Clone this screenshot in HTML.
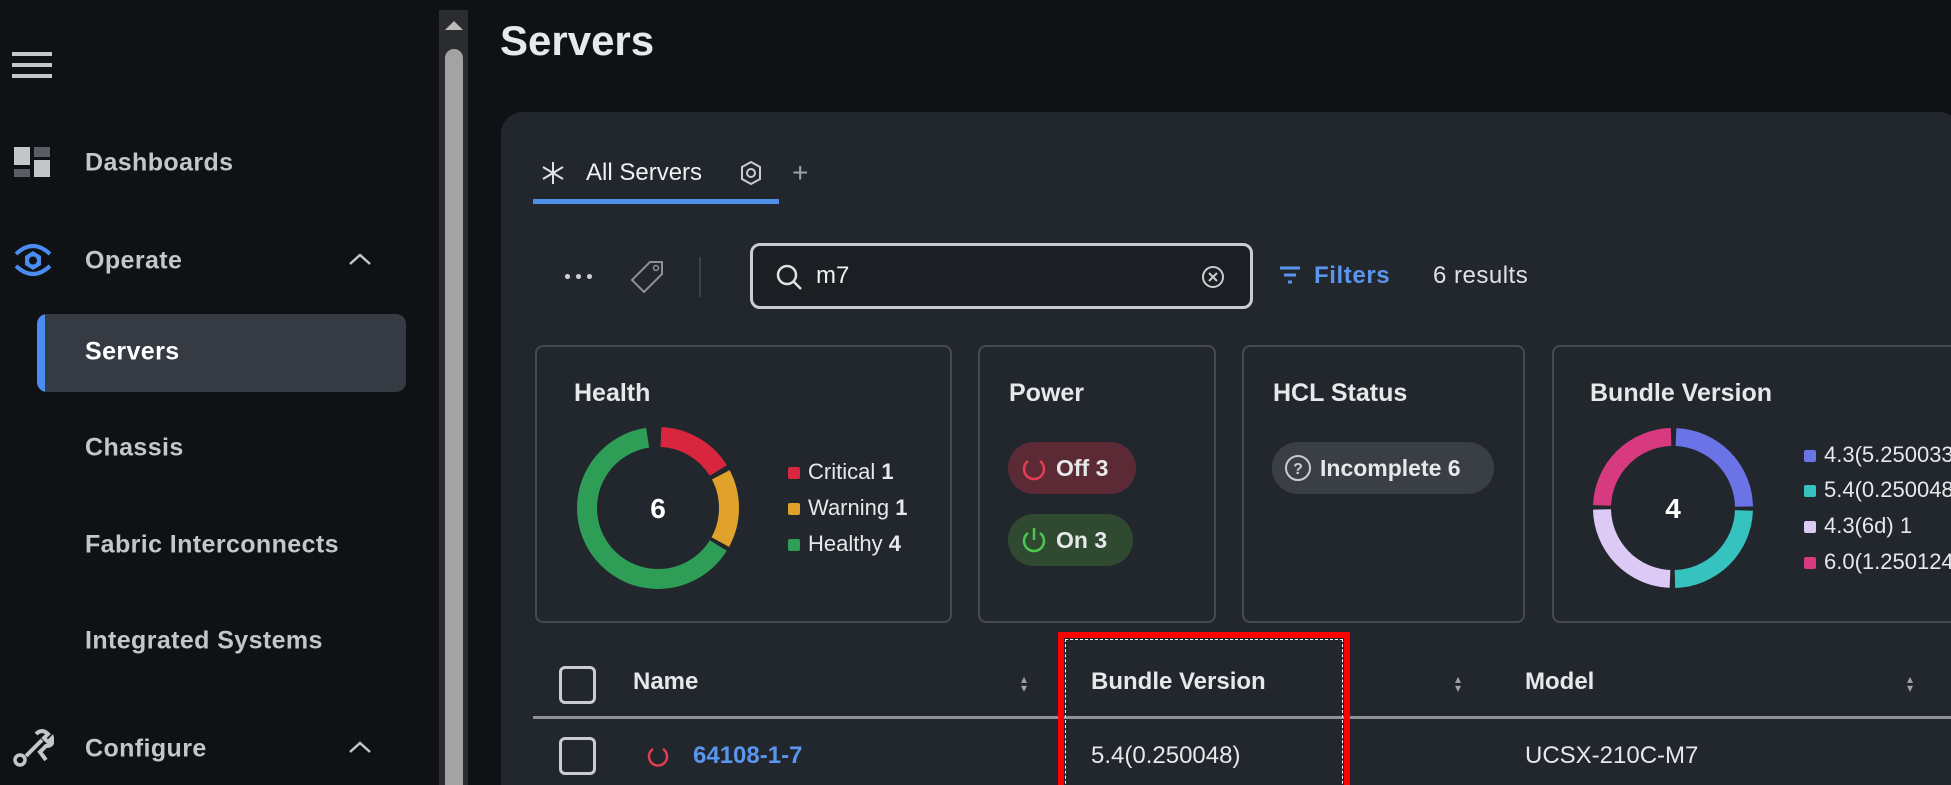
<!DOCTYPE html>
<html><head><meta charset="utf-8"><style>
*{margin:0;padding:0;box-sizing:border-box}
html,body{width:1951px;height:785px;overflow:hidden}
body{background:#0f1115;font-family:"Liberation Sans",sans-serif;color:#e6e8ea;position:relative}
#w{position:absolute;left:0;top:0;width:1951px;height:785px;overflow:hidden}
.a{position:absolute;white-space:nowrap}
.nav{font-size:25px;font-weight:bold;color:#c3c6ca;letter-spacing:.4px;transform:translateY(-50%)}
.t{font-size:24px;transform:translateY(-50%)}
.b{font-weight:bold}
.card{position:absolute;top:345px;height:278px;border:2px solid #454a52;border-radius:8px;background:#22262d}
.ct{font-size:25px;font-weight:bold;color:#e6e8ea}
.sq{display:inline-block;width:12px;height:12px;border-radius:2px;margin-right:8px}
.pill{position:absolute;height:52px;border-radius:26px;font-size:23px;font-weight:bold;display:flex;align-items:center;padding-left:10px}
.cb{position:absolute;width:37px;height:38px;border:3px solid #c9ccd0;border-radius:6px}
.sort{position:absolute;color:#9ea3a9;font-size:12px;line-height:9px;transform:translateY(-50%)}
</style></head><body><div id="w">
<div class="a" style="left:12px;top:52px;width:40px;height:4px;background:#c3c6ca"></div>
<div class="a" style="left:12px;top:63px;width:40px;height:4px;background:#c3c6ca"></div>
<div class="a" style="left:12px;top:74px;width:40px;height:4px;background:#c3c6ca"></div>
<svg class="a" style="left:12px;top:147px" width="40" height="32"><rect x="2" y="0" width="16" height="18" fill="#c3c6ca"/><rect x="2" y="22" width="16" height="8" fill="#5a5e64"/><rect x="22" y="0" width="16" height="10" fill="#5a5e64"/><rect x="22" y="13" width="16" height="17" fill="#c3c6ca"/></svg>
<div class="a nav" style="left:85px;top:163px">Dashboards</div>
<svg class="a" style="left:10px;top:240px" width="46" height="40" viewBox="0 0 46 40"><path d="M6 14 Q23 -2 40 14" stroke="#4a8cf0" stroke-width="4" fill="none"/><path d="M6 26 Q23 42 40 26" stroke="#4a8cf0" stroke-width="4" fill="none"/><polygon points="23,11 31,16 31,25 23,30 15,25 15,16" fill="#4a8cf0"/><circle cx="23" cy="20.5" r="4" fill="#0f1115"/></svg>
<div class="a nav" style="left:85px;top:261px">Operate</div>
<svg class="a" style="left:348px;top:252px" width="24" height="14"><path d="M2 12 L12 3 L22 12" stroke="#c3c6ca" stroke-width="2.5" fill="none"/></svg>
<div class="a" style="left:37px;top:314px;width:369px;height:78px;background:#363a42;border-radius:10px;overflow:hidden"><div style="width:8px;height:100%;background:#4a8cf0"></div></div>
<div class="a nav" style="left:85px;top:352px;color:#fff">Servers</div>
<div class="a nav" style="left:85px;top:448px">Chassis</div>
<div class="a nav" style="left:85px;top:545px">Fabric Interconnects</div>
<div class="a nav" style="left:85px;top:641px">Integrated Systems</div>
<svg class="a" style="left:12px;top:728px" width="42" height="40"><path d="M14 28 L30 12 M24 6 Q30 0 36 6 L32 10 L36 14 L40 10 Q42 18 34 18 L28 24 L34 32" stroke="#c3c6ca" stroke-width="4" fill="none"/><circle cx="8" cy="32" r="5" stroke="#c3c6ca" stroke-width="3.5" fill="none"/></svg>
<div class="a nav" style="left:85px;top:749px">Configure</div>
<svg class="a" style="left:348px;top:740px" width="24" height="14"><path d="M2 12 L12 3 L22 12" stroke="#c3c6ca" stroke-width="2.5" fill="none"/></svg>
<div class="a" style="left:439px;top:10px;width:29px;height:775px;background:#2a2c30"></div>
<svg class="a" style="left:442px;top:18px" width="24" height="14"><polygon points="3,12 12,3 21,12" fill="#bbb"/></svg>
<div class="a" style="left:445px;top:49px;width:18px;height:760px;background:#a3a3a3;border-radius:9px"></div>
<div class="a b" style="left:500px;top:41px;font-size:42px;transform:translateY(-50%);color:#e6e8ea">Servers</div>
<div class="a" style="left:501px;top:112px;width:1460px;height:700px;background:#22262d;border-radius:22px"></div>
<svg class="a" style="left:540px;top:160px" width="26" height="26"><path d="M13 2 V24 M3 7 L23 19 M3 19 L23 7" stroke="#dfe1e4" stroke-width="2"/></svg>
<div class="a t" style="left:586px;top:173px;color:#eef0f2">All Servers</div>
<svg class="a" style="left:738px;top:160px" width="26" height="26"><polygon points="13,2 22,7 22,19 13,24 4,19 4,7" stroke="#c9ccd0" stroke-width="2" fill="none"/><circle cx="13" cy="13" r="4" stroke="#c9ccd0" stroke-width="2" fill="none"/></svg>
<div class="a t" style="left:792px;top:173px;color:#9ea3a9;font-size:28px">+</div>
<div class="a" style="left:533px;top:199px;width:246px;height:5px;background:#4f8fe8"></div>
<div class="a" style="left:562px;top:274px;width:34px;height:5px;background:radial-gradient(circle,#c9ccd0 2.3px,transparent 2.8px) 0 0/11px 5px repeat-x"></div>
<svg class="a" style="left:628px;top:258px" width="38" height="38"><path d="M22 4 L34 4 L34 16 L16 34 L4 22 Z" stroke="#8d9197" stroke-width="2" fill="none"/><circle cx="28" cy="10" r="2.5" stroke="#8d9197" stroke-width="1.5" fill="none"/></svg>
<div class="a" style="left:699px;top:257px;width:2px;height:40px;background:#3c4047"></div>
<div class="a" style="left:750px;top:243px;width:503px;height:66px;border:3px solid #c9ccd0;border-radius:10px;background:#1b1e23"></div>
<svg class="a" style="left:774px;top:262px" width="30" height="30"><circle cx="13" cy="13" r="9" stroke="#dfe1e4" stroke-width="2.5" fill="none"/><path d="M19 19 L27 27" stroke="#dfe1e4" stroke-width="2.5"/></svg>
<div class="a t" style="left:816px;top:276px;color:#eef0f2">m7</div>
<svg class="a" style="left:1200px;top:264px" width="26" height="26"><circle cx="13" cy="13" r="10" stroke="#c9ccd0" stroke-width="2" fill="none"/><path d="M9 9 L17 17 M17 9 L9 17" stroke="#c9ccd0" stroke-width="2"/></svg>
<svg class="a" style="left:1278px;top:264px" width="24" height="22"><path d="M2 4 H22 M6 11 H18 M10 18 H14" stroke="#5b96ee" stroke-width="3"/></svg>
<div class="a t b" style="left:1314px;top:276px;color:#5b96ee;letter-spacing:.6px">Filters</div>
<div class="a t" style="left:1433px;top:276px;color:#dfe1e4;letter-spacing:.5px">6 results</div>
<div class="card" style="left:535px;width:417px">
 <div class="a ct" style="left:37px;top:32px">Health</div>
 <svg class="a" style="left:39px;top:79px" width="164" height="164" viewBox="0 0 164 164">
  <g fill="none" stroke-width="20" transform="rotate(-90 82 82)">
   <circle cx="82" cy="82" r="71" stroke="#2e9e57" stroke-dasharray="284.5 500" stroke-dashoffset="-151"/>
   <circle cx="82" cy="82" r="71" stroke="#d9263f" stroke-dasharray="69 500" stroke-dashoffset="-3"/>
   <circle cx="82" cy="82" r="71" stroke="#e0a22a" stroke-dasharray="70 500" stroke-dashoffset="-77"/>
  </g>
  <text x="82" y="92" text-anchor="middle" font-size="28" font-weight="bold" fill="#fff" font-family="Liberation Sans">6</text>
 </svg>
 <div class="a t" style="left:251px;top:125px;font-size:22px"><span class="sq" style="background:#d9263f"></span>Critical <b>1</b></div>
 <div class="a t" style="left:251px;top:161px;font-size:22px"><span class="sq" style="background:#e0a22a"></span>Warning <b>1</b></div>
 <div class="a t" style="left:251px;top:197px;font-size:22px"><span class="sq" style="background:#2e9e57"></span>Healthy <b>4</b></div>
</div>
<div class="card" style="left:978px;width:238px">
 <div class="a ct" style="left:29px;top:32px">Power</div>
 <div class="pill" style="left:28px;top:95px;width:128px;background:#5c2a34"><svg width="32" height="32" style="margin-right:6px"><path d="M10 9 A10 10 0 1 0 22 9" stroke="#e43c52" stroke-width="2.5" fill="none"/></svg>Off 3</div>
 <div class="pill" style="left:28px;top:167px;width:125px;background:#2f4a30"><svg width="32" height="32" style="margin-right:6px"><path d="M10 9 A10 10 0 1 0 22 9" stroke="#4cc750" stroke-width="2.5" fill="none"/><path d="M16 4 V16" stroke="#4cc750" stroke-width="2.5"/></svg>On 3</div>
</div>
<div class="card" style="left:1242px;width:283px">
 <div class="a ct" style="left:29px;top:32px">HCL Status</div>
 <div class="pill" style="left:28px;top:95px;width:222px;background:#3a3e45"><svg width="32" height="32" style="margin-right:6px"><circle cx="16" cy="16" r="12" stroke="#c9ccd0" stroke-width="2" fill="none"/><text x="16" y="22" text-anchor="middle" font-size="16" fill="#c9ccd0" font-family="Liberation Sans">?</text></svg>Incomplete 6</div>
</div>
<div class="card" style="left:1552px;width:460px">
 <div class="a ct" style="left:36px;top:32px">Bundle Version</div>
 <svg class="a" style="left:37px;top:79px" width="164" height="164" viewBox="0 0 164 164">
  <g fill="none" stroke-width="18" transform="rotate(-90 82 82)">
   <circle cx="82" cy="82" r="71" stroke="#6b74e6" stroke-dasharray="107 500" stroke-dashoffset="-3"/>
   <circle cx="82" cy="82" r="71" stroke="#36c2be" stroke-dasharray="107 500" stroke-dashoffset="-114"/>
   <circle cx="82" cy="82" r="71" stroke="#dcc9f5" stroke-dasharray="107 500" stroke-dashoffset="-226"/>
   <circle cx="82" cy="82" r="71" stroke="#d83a80" stroke-dasharray="107 500" stroke-dashoffset="-337"/>
  </g>
  <text x="82" y="92" text-anchor="middle" font-size="28" font-weight="bold" fill="#fff" font-family="Liberation Sans">4</text>
 </svg>
 <div class="a t" style="left:250px;top:108px;font-size:22px"><span class="sq" style="background:#6b74e6"></span>4.3(5.250033) 1</div>
 <div class="a t" style="left:250px;top:143px;font-size:22px"><span class="sq" style="background:#36c2be"></span>5.4(0.250048) 1</div>
 <div class="a t" style="left:250px;top:179px;font-size:22px"><span class="sq" style="background:#dcc9f5"></span>4.3(6d) 1</div>
 <div class="a t" style="left:250px;top:215px;font-size:22px"><span class="sq" style="background:#d83a80"></span>6.0(1.250124) 1</div>
</div>
<div class="cb" style="left:559px;top:666px"></div>
<div class="a t b" style="left:633px;top:682px">Name</div>
<div class="sort" style="left:1021px;top:684px">▴<br>▾</div>
<div class="a t b" style="left:1091px;top:682px">Bundle Version</div>
<div class="sort" style="left:1455px;top:684px">▴<br>▾</div>
<div class="a t b" style="left:1525px;top:682px">Model</div>
<div class="sort" style="left:1907px;top:684px">▴<br>▾</div>
<div class="a" style="left:533px;top:716px;width:1420px;height:3px;background:#8e9297"></div>
<div class="cb" style="left:559px;top:737px"></div>
<svg class="a" style="left:645px;top:741px" width="26" height="30"><path d="M8 8 A9 9 0 1 0 18 8" stroke="#e43c52" stroke-width="2.5" fill="none"/></svg>
<div class="a t b" style="left:693px;top:756px;color:#5b96ee">64108-1-7</div>
<div class="a t" style="left:1091px;top:756px">5.4(0.250048)</div>
<div class="a t" style="left:1525px;top:756px">UCSX-210C-M7</div>
<div class="a" style="left:1058px;top:632px;width:292px;height:170px;border:6px solid #ff0000"></div>
<div class="a" style="left:1065px;top:639px;width:278px;height:160px;border:1px dashed #fff"></div>
</div></body></html>
